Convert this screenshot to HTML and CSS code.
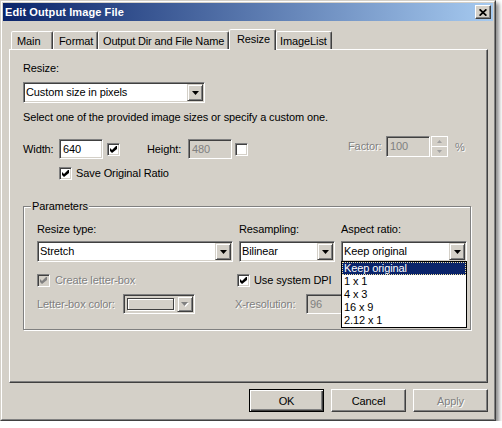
FILE: index.html
```html
<!DOCTYPE html>
<html>
<head>
<meta charset="utf-8">
<link rel="stylesheet" href="styles.css">
</head>
<body>
<div class="window">
  <div class="window-inner">
    <div class="titlebar">
      <span class="title">Edit Output Image File</span>
      <div class="close-btn">
        <svg width="8" height="7" viewBox="0 0 8 7"><path d="M0.6 0.3 L7.4 6.7 M7.4 0.3 L0.6 6.7" stroke="#000" stroke-width="1.7" fill="none"/></svg>
      </div>
    </div>
    <div class="dialog">
      <div class="tabs">
        <div class="tab tab-main">Main</div>
        <div class="tab tab-format">Format</div>
        <div class="tab tab-output">Output Dir and File Name</div>
        <div class="tab tab-resize active">Resize</div>
        <div class="tab tab-imagelist">ImageList</div>
      </div>
      <div class="panel">
        <div class="label">Resize:</div>
        <div class="combo combo-resize">
          <span class="combo-text">Custom size in pixels</span>
          <span class="combo-btn"><svg width="7" height="4" viewBox="0 0 7 4"><path d="M0 0H7L3.5 4Z" fill="#000"/></svg></span>
        </div>
        <div class="hint">Select one of the provided image sizes or specify a custom one.</div>
        <div class="size-row">
          <span class="label lbl-width">Width:</span>
          <div class="field w44">640</div>
          <span class="check gap4"><svg width="7" height="7" viewBox="0 0 7 7"><polygon points="0,2 2,4 6,0 7,0 7,3 2,7 0,5" fill="#000"/></svg></span>
          <span class="label lbl-height">Height:</span>
          <div class="field w44 disabled">480</div>
          <span class="check gap3"></span>
          <div class="factor">
            <span class="label lbl-factor disabled-text">Factor:</span>
            <div class="field field-factor disabled">100</div>
            <div class="spin">
              <div class="spin-btn spin-up"><svg width="5" height="3" viewBox="0 0 5 3"><path d="M2.5 0L5 3H0Z" fill="#a0a0a0"/></svg></div>
              <div class="spin-btn"><svg width="5" height="3" viewBox="0 0 5 3"><path d="M0 0H5L2.5 3Z" fill="#a0a0a0"/></svg></div>
            </div>
            <span class="percent disabled-text">%</span>
          </div>
        </div>
        <div class="check-item ratio-row">
          <span class="check"><svg width="7" height="7" viewBox="0 0 7 7"><polygon points="0,2 2,4 6,0 7,0 7,3 2,7 0,5" fill="#000"/></svg></span>
          <span class="label">Save Original Ratio</span>
        </div>
        <fieldset class="group">
          <legend class="legend">Parameters</legend>
          <div class="prow">
            <div class="label">Resize type:</div>
            <div class="label">Resampling:</div>
            <div class="label">Aspect ratio:</div>
          </div>
          <div class="prow prow-combos">
            <div class="combo">
              <span class="combo-text">Stretch</span>
              <span class="combo-btn"><svg width="7" height="4" viewBox="0 0 7 4"><path d="M0 0H7L3.5 4Z" fill="#000"/></svg></span>
            </div>
            <div class="combo">
              <span class="combo-text">Bilinear</span>
              <span class="combo-btn"><svg width="7" height="4" viewBox="0 0 7 4"><path d="M0 0H7L3.5 4Z" fill="#000"/></svg></span>
            </div>
            <div class="aspect">
              <div class="combo">
                <span class="combo-text">Keep original</span>
                <span class="combo-btn"><svg width="7" height="4" viewBox="0 0 7 4"><path d="M0 0H7L3.5 4Z" fill="#000"/></svg></span>
              </div>
              <div class="dd-list">
                <div class="dd-item sel">Keep original</div>
                <div class="dd-item">1 x 1</div>
                <div class="dd-item">4 x 3</div>
                <div class="dd-item">16 x 9</div>
                <div class="dd-item">2.12 x 1</div>
              </div>
            </div>
          </div>
          <div class="prow prow-checks">
            <div class="check-item">
              <span class="check disabled"><svg width="7" height="7" viewBox="0 0 7 7"><polygon points="0,2 2,4 6,0 7,0 7,3 2,7 0,5" fill="#808080"/></svg></span>
              <span class="label disabled-text">Create letter-box</span>
            </div>
            <div class="check-item span2 dpi">
              <span class="check"><svg width="7" height="7" viewBox="0 0 7 7"><polygon points="0,2 2,4 6,0 7,0 7,3 2,7 0,5" fill="#000"/></svg></span>
              <span class="label">Use system DPI</span>
            </div>
          </div>
          <div class="prow prow-res">
            <div class="inline">
              <span class="label lbl-color disabled-text">Letter-box color:</span>
              <div class="combo combo-color disabled">
                <span class="swatch"></span>
                <span class="combo-btn"><svg width="8" height="5" viewBox="0 0 8 5"><path d="M1 1H8L4.5 5Z" fill="#fff"/><path d="M0 0H7L3.5 4Z" fill="#808080"/></svg></span>
              </div>
            </div>
            <div class="inline span2 xres">
              <span class="label lbl-xres disabled-text">X-resolution:</span>
              <div class="field w44 disabled">96</div>
            </div>
          </div>
        </fieldset>
      </div>
      <div class="buttons">
        <div class="btn default">OK</div>
        <div class="btn">Cancel</div>
        <div class="btn disabled-text">Apply</div>
      </div>
    </div>
  </div>
</div>
</body>
</html>
```
FILE: styles.css
```css
body {
  margin: 0;
  background: #fff;
  font-family: "Liberation Sans", Arial, sans-serif;
  font-size: 11px;
  letter-spacing: -0.1px;
  color: #000;
}

.window {
  box-sizing: border-box;
  width: 496px;
  height: 421px;
  border: 1px solid;
  border-color: #d4d0c8 #404040 #404040 #d4d0c8;
  background: #d4d0c8;
  box-shadow: 3px 3px 4px rgba(0, 0, 0, 0.45);
}

.window-inner {
  box-sizing: border-box;
  height: 100%;
  border: 1px solid;
  border-color: #fff #808080 #808080 #fff;
  padding: 1px;
  display: flex;
  flex-direction: column;
}

.titlebar {
  height: 18px;
  flex: none;
  display: flex;
  align-items: center;
  justify-content: space-between;
  padding: 0 2px;
  background: linear-gradient(to right, #0a246a, #a6caf0);
}

.title {
  color: #fff;
  font-weight: bold;
  font-size: 11px;
  letter-spacing: 0.1px;
}

.close-btn {
  box-sizing: border-box;
  width: 16px;
  height: 14px;
  border: 1px solid;
  border-color: #fff #404040 #404040 #fff;
  box-shadow: inset -1px -1px #808080;
  background: #d4d0c8;
  display: flex;
  align-items: center;
  justify-content: center;
}

.close-btn svg { display: block; }

.dialog {
  padding: 8px 5px 0 6px;
  display: flex;
  flex-direction: column;
}

.tabs {
  display: flex;
  align-items: flex-end;
  height: 20px;
  padding-left: 2px;
  position: relative;
  z-index: 1;
}

.tab {
  box-sizing: border-box;
  height: 18px;
  border: 1px solid;
  border-bottom: none;
  border-color: #fff #404040 transparent #fff;
  border-radius: 2px 2px 0 0;
  box-shadow: inset -1px 0 #808080;
  padding: 1px 0 0 5px;
  line-height: 16px;
  white-space: nowrap;
  overflow: hidden;
  background: #d4d0c8;
}

.tab.active {
  height: 21px;
  margin-bottom: -1px;
  padding-left: 7px;
}

.tab-main { width: 42px; }
.tab-format { width: 45px; }
.tab-output { width: 131px; padding-left: 4px; letter-spacing: -0.15px; }
.tab-resize { width: 47px; }
.tab-imagelist { width: 56px; padding-left: 3px; }

.panel {
  box-sizing: border-box;
  width: 479px;
  height: 334px;
  border: 1px solid;
  border-color: #fff #404040 #404040 #fff;
  box-shadow: inset -1px -1px #808080;
  padding: 12px 0 0 13px;
}

.label {
  line-height: 13px;
  white-space: nowrap;
}

.disabled-text {
  color: #808080;
  text-shadow: 1px 1px 0 #fff;
}

.combo {
  box-sizing: border-box;
  height: 21px;
  display: flex;
  align-items: stretch;
  border: 1px solid;
  border-color: #808080 #fff #fff #808080;
  box-shadow: inset 1px 1px #404040, inset -1px -1px #d4d0c8;
  padding: 1px;
  background: #fff;
}

.combo-text {
  flex: 1;
  padding-left: 1px;
  line-height: 17px;
  white-space: nowrap;
  overflow: hidden;
}

.combo-btn {
  box-sizing: border-box;
  width: 16px;
  flex: none;
  border: 1px solid;
  border-color: #d4d0c8 #404040 #404040 #d4d0c8;
  box-shadow: inset 1px 1px #fff, inset -1px -1px #808080;
  background: #d4d0c8;
  display: flex;
  align-items: center;
  justify-content: center;
}

.combo-btn svg { display: block; }

.combo-resize {
  width: 182px;
  margin-top: 7px;
}

.hint {
  margin-top: 8px;
  line-height: 13px;
}

.size-row {
  display: flex;
  align-items: center;
  height: 20px;
  margin-top: 15px;
}

.lbl-width { width: 36px; }
.lbl-height { width: 41px; margin-left: 27px; }

.field {
  box-sizing: border-box;
  height: 20px;
  border: 1px solid;
  border-color: #808080 #fff #fff #808080;
  box-shadow: inset 1px 1px #404040, inset -1px -1px #d4d0c8;
  padding: 0 3px;
  line-height: 18px;
  background: #fff;
  white-space: nowrap;
}

.field.disabled {
  background: #d4d0c8;
  color: #808080;
}

.w44 { width: 44px; flex: none; }

.check {
  box-sizing: border-box;
  width: 13px;
  height: 13px;
  flex: none;
  border: 1px solid;
  border-color: #808080 #fff #fff #808080;
  box-shadow: inset 1px 1px #404040, inset -1px -1px #d4d0c8;
  background: #fff;
  display: flex;
  align-items: center;
  justify-content: center;
}

.check svg { display: block; }
.check.disabled { background: #d4d0c8; }
.gap4 { margin-left: 4px; }
.gap3 { margin-left: 3px; }

.factor {
  display: flex;
  align-items: center;
  align-self: flex-start;
  height: 21px;
  margin-top: -3px;
  margin-left: 100px;
}

.lbl-factor { width: 38px; }

.field-factor {
  width: 44px;
  height: 21px;
  line-height: 19px;
}

.spin {
  box-sizing: border-box;
  width: 17px;
  height: 21px;
  margin-left: 1px;
  border: 1px solid #fff;
  display: flex;
  flex-direction: column;
  background: #d4d0c8;
}

.spin-btn {
  flex: 1;
  display: flex;
  align-items: center;
  justify-content: center;
}

.spin-btn svg { display: block; }
.spin-up { border-bottom: 1px solid #fff; }

.percent {
  margin-left: 7px;
}

.check-item {
  display: flex;
  align-items: center;
  gap: 5px;
  height: 13px;
}

.ratio-row {
  margin-top: 8px;
  margin-left: 36px;
  gap: 4px;
}

.group {
  box-sizing: border-box;
  width: 448px;
  min-width: 0;
  margin: 20px 0 0;
  padding: 10px 0 15px 13px;
  border: 1px solid #808080;
  box-shadow: inset 1px 1px #fff, 1px 1px #fff;
}

.legend {
  padding: 0 1px;
  margin-left: -6px;
  line-height: 13px;
  background: #d4d0c8;
}

.prow {
  display: grid;
  grid-template-columns: 196px 96px 126px;
  column-gap: 6px;
}

.prow-combos { margin-top: 5px; }
.prow-checks { margin-top: 12px; height: 13px; }
.prow-res { margin-top: 7px; height: 20px; }

.span2 { grid-column: span 2; }
.dpi { margin-left: -2px; gap: 4px; }

.inline {
  display: flex;
  align-items: center;
}

.lbl-color { width: 86px; }

.combo-color {
  width: 72px;
  height: 20px;
}

.combo-color.disabled { background: #d4d0c8; }

.swatch {
  flex: 1;
  margin: 2px 3px 2px 2px;
  border: 1px solid #404040;
  box-shadow: inset 1px 1px #fff, 1px 1px #fff;
}

.xres { margin-left: -4px; }
.lbl-xres { width: 71px; }

.aspect { position: relative; }

.dd-list {
  position: absolute;
  top: 20px;
  left: 0;
  width: 126px;
  box-sizing: border-box;
  border: 1px solid #000;
  background: #fff;
  z-index: 2;
}

.dd-item {
  height: 13px;
  line-height: 13px;
  padding-left: 2px;
  white-space: nowrap;
}

.dd-item.sel {
  background: #0a246a;
  color: #fff;
  outline: 1px dotted #f0e0a0;
  outline-offset: -1px;
}

.buttons {
  display: flex;
  justify-content: flex-end;
  gap: 7px;
  margin-top: 6px;
}

.btn {
  box-sizing: border-box;
  width: 75px;
  height: 23px;
  border: 1px solid;
  border-color: #fff #404040 #404040 #fff;
  box-shadow: inset -1px -1px #808080;
  display: flex;
  align-items: center;
  justify-content: center;
}

.btn.default {
  border-color: #000;
  box-shadow: inset 1px 1px #fff, inset -1px -1px #404040, inset -2px -2px #808080;
}
```
